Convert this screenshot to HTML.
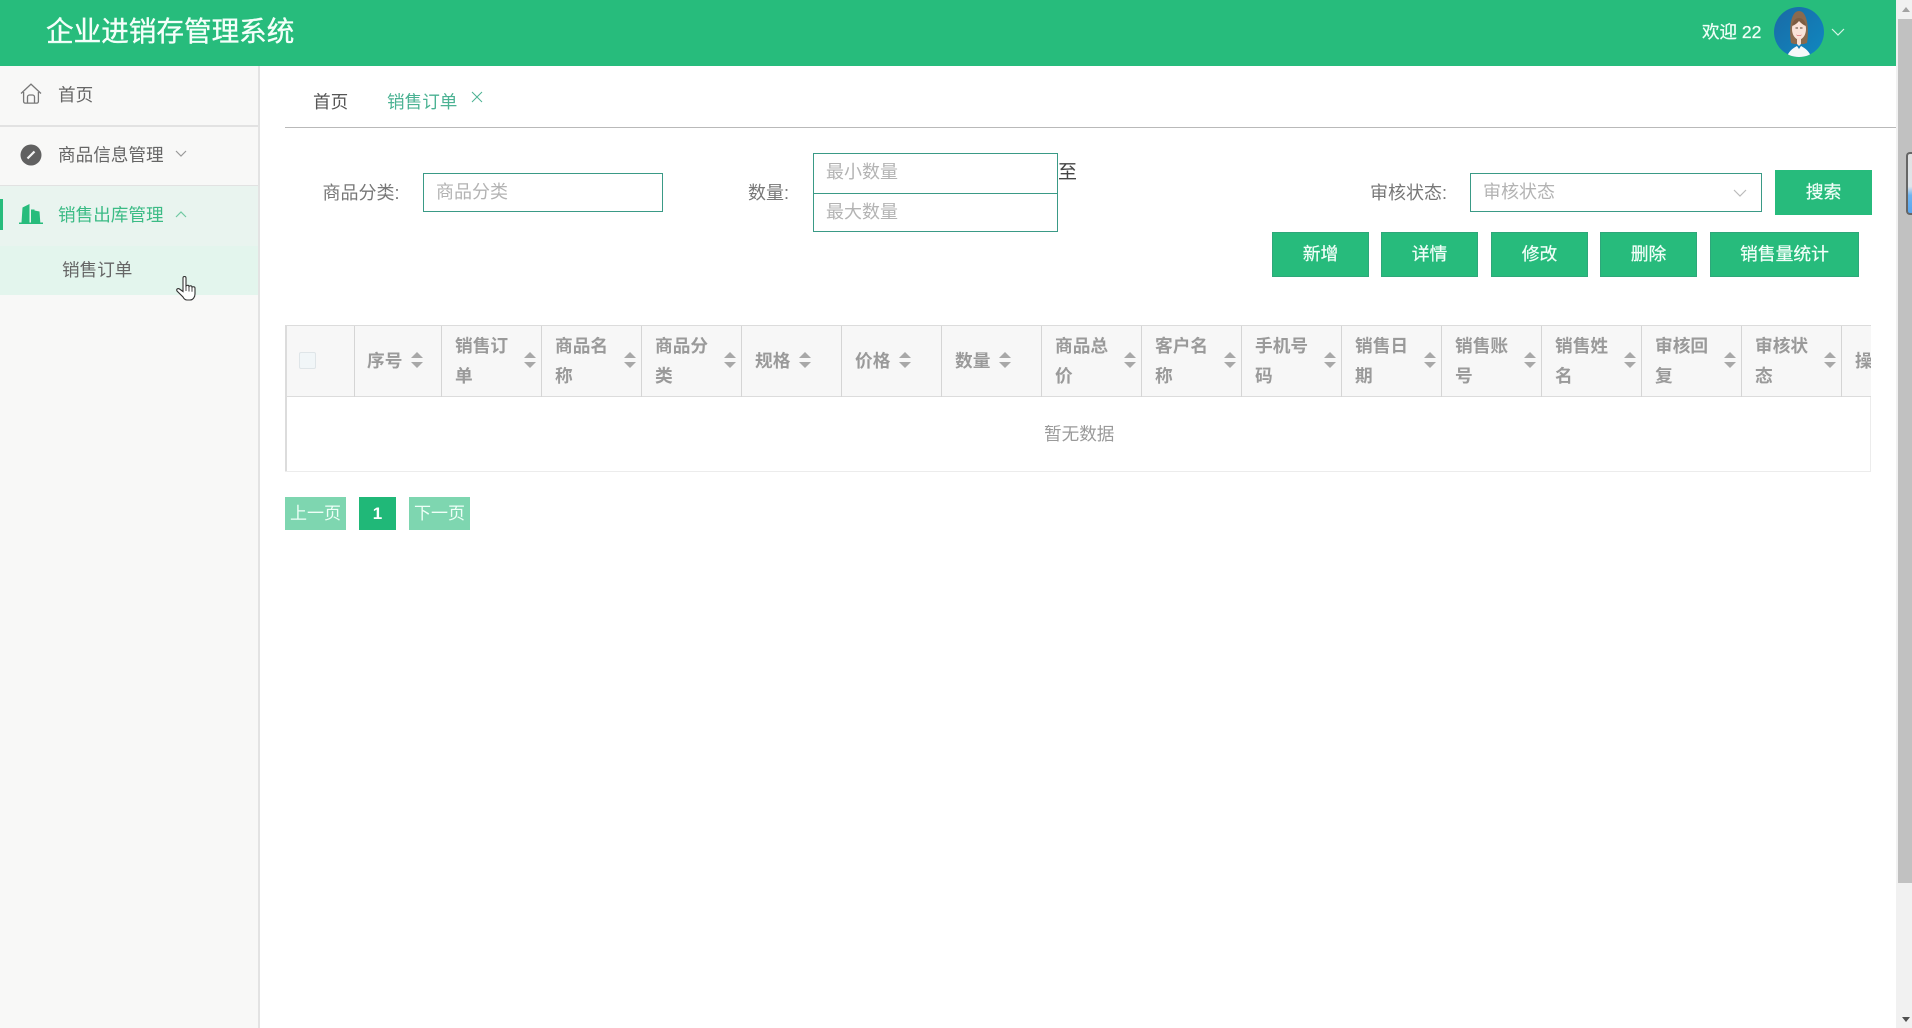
<!DOCTYPE html>
<html lang="zh-CN"><head><meta charset="utf-8"><title>企业进销存管理系统</title>
<style>
html,body{margin:0;padding:0;width:1912px;height:1028px;overflow:hidden;background:#fff}
body{position:relative;font-family:"Liberation Sans","Noto Sans CJK SC",sans-serif;font-size:17.6px;color:#666}
.a{position:absolute;white-space:nowrap}
.t{position:absolute;white-space:nowrap;line-height:30px;height:30px}
.b{position:absolute;background:#27bb7c;border:1px solid #2ea77a;box-sizing:border-box;color:#f2fff9;text-align:center;font-size:17.8px;line-height:43px;height:45px;top:232px;-webkit-text-stroke:.2px #f2fff9}
.i{position:absolute;box-sizing:border-box;border:1.5px solid #3a9a86;background:#fff;color:#b3b3b3;padding-left:12px;font-size:18px}
.c{position:absolute;top:326px;width:1px;height:71px;background:#d5d5d5}
.h{position:absolute;font-weight:bold;color:#9a9a9a;font-size:17.7px;line-height:30px;white-space:nowrap}
.s{position:absolute;width:12px;height:16px;top:352px}
.s:before,.s:after{content:"";position:absolute;left:0;border-left:6px solid transparent;border-right:6px solid transparent}
.s:before{top:0;border-bottom:6.5px solid #a8a8a8}
.s:after{bottom:0;border-top:6.5px solid #a8a8a8}
</style></head><body>

<!-- header -->
<div class="a" style="left:0;top:0;width:1896px;height:66px;background:#27bc7c"></div>
<div class="t" style="left:46px;top:12px;line-height:40px;height:40px;font-size:27.6px;color:#f4fffa;-webkit-text-stroke:.35px #f4fffa">企业进销存管理系统</div>
<div class="t" style="left:1702px;top:17px;color:#effff8;font-size:17.5px;-webkit-text-stroke:.25px #effff8">欢迎 22</div>
<svg class="a" style="left:1774px;top:7px" width="50" height="50" viewBox="0 0 50 50">
<defs><linearGradient id="g" x1="0" y1="0" x2="1" y2="1"><stop offset="0" stop-color="#1a6aa6"/><stop offset="1" stop-color="#0f88c0"/></linearGradient><clipPath id="cp"><circle cx="25" cy="25" r="25"/></clipPath></defs>
<g clip-path="url(#cp)"><rect width="50" height="50" fill="url(#g)"/>
<path d="M17 36C15 24 16 4 25 4s10 20 8 32l-3 1H20z" fill="#8a6a4e"/>
<ellipse cx="25" cy="22" rx="7" ry="10.500" fill="#fae3d9"/>
<path d="M18 19c1-6 4-8 7-8s6 2 7 8c-3-1-5-3-7-5-1.500 2-4 4-7 5z" fill="#7d5d43"/>
<path d="M23 31h4v6l-2 2-2-2z" fill="#f8dfd4"/>
<path d="M22 27.500c2 1.200 4 1.200 6 0-1 2-5 2-6 0z" fill="#d6505f"/>
<path d="M21.500 21h2.500M26 21h2.500" stroke="#5a4030" stroke-width=".9"/>
<path d="M13 50c1-5 6-9 10-11l2 3 2-3c4 2 9 6 10 11z" fill="#f6f8f9"/></g></svg>
<svg class="a" style="left:1830px;top:27px" width="16" height="11"><path d="M2 2l6 6 6-6" fill="none" stroke="#d8f5e8" stroke-width="1.2"/></svg>

<!-- sidebar -->
<div class="a" style="left:0;top:66px;width:258px;height:962px;background:#f8f8f7;border-right:2px solid #e3e3e3"></div>
<div class="a" style="left:0;top:125px;width:258px;height:1.5px;background:#e2e2e2"></div>
<div class="a" style="left:0;top:185px;width:258px;height:1.5px;background:#e2e2e2"></div>
<div class="a" style="left:0;top:186px;width:258px;height:60px;background:#e9f4ef"></div>
<div class="a" style="left:0;top:246px;width:258px;height:49px;background:#e3f5ed"></div>
<div class="a" style="left:0;top:199px;width:3px;height:31px;background:#27bc7c"></div>

<svg class="a" style="left:20px;top:83px" width="22" height="22" viewBox="0 0 22 22"><path d="M1 10.500L11 1.200l10 9.300M3.600 9v9.500a1.600 1.600 0 0 0 1.600 1.600h11.600a1.600 1.600 0 0 0 1.600-1.600V9M7.500 20v-6a2 2 0 0 1 2-2h3a2 2 0 0 1 2 2v6" fill="none" stroke="#777" stroke-width="1.300"/></svg>
<div class="t" style="left:58px;top:80px">首页</div>

<svg class="a" style="left:20px;top:144px" width="22" height="22" viewBox="0 0 22 22"><circle cx="11" cy="11" r="10.500" fill="#616161"/><path d="M7.500 14.500L14.500 7.500" stroke="#f4f4f4" stroke-width="2.200"/></svg>
<div class="t" style="left:58px;top:140px">商品信息管理</div>
<svg class="a" style="left:174px;top:149px" width="14" height="10"><path d="M2 2l5 5 5-5" fill="none" stroke="#999" stroke-width="1.200"/></svg>

<svg class="a" style="left:19px;top:203px" width="24" height="21" viewBox="0 0 24 21"><path d="M0 19.500h24V21H0z" fill="#27bc7c"/><path d="M2.500 19.500L3.500 4.500 10.500 1v18.500zM12 19.500V6.500h3.500v13zM15.500 7.500l5 1 .8 11h-5.800z" fill="#27bc7c"/></svg>
<div class="t" style="left:58px;top:199.500px;color:#3bbb85">销售出库管理</div>
<svg class="a" style="left:174px;top:209px" width="14" height="10"><path d="M2 8l5-5 5 5" fill="none" stroke="#6fc9a2" stroke-width="1.200"/></svg>

<div class="t" style="left:62px;top:255px">销售订单</div>
<svg class="a" style="left:176px;top:276px" width="22" height="26" viewBox="0 0 22 26"><path d="M7 2c0-2 3-2 3 0v8c1-1 3-1 3 .500 1-1 3-1 3 .700 1-.800 3-.500 3 1V18c0 3-2 6-5 6h-3c-2 0-3-1-4-3L1 15c-1-2 1-3 2.500-2L7 15.500z" fill="#fff" stroke="#333" stroke-width="1.100"/><path d="M10 10v5M13 10.500v5M16 11.200v4.500" stroke="#333" stroke-width=".9"/></svg>

<!-- tabs -->
<div class="a" style="left:285px;top:127px;width:1611px;height:1px;background:#b9b9b9"></div>
<div class="t" style="left:313px;top:87px;color:#555">首页</div>
<div class="t" style="left:387px;top:87px;color:#4bb293">销售订单</div>
<svg class="a" style="left:471px;top:91px" width="12" height="12"><path d="M1 1l10 10M11 1L1 11" stroke="#4bb293" stroke-width="1"/></svg>

<!-- search -->
<div class="t" style="left:322.500px;top:178px;color:#777;font-size:18px">商品分类:</div>
<div class="i" style="left:423px;top:173px;width:240px;height:39px;line-height:36px">商品分类</div>
<div class="t" style="left:748px;top:178px;color:#777;font-size:18px">数量:</div>
<div class="i" style="left:813px;top:153px;width:245px;height:41px;line-height:37px">最小数量</div>
<div class="i" style="left:813px;top:193px;width:245px;height:39px;line-height:37px">最大数量</div>
<div class="t" style="left:1058px;top:158px;font-size:19px;color:#444">至</div>
<div class="t" style="left:1370px;top:178px;color:#777;font-size:18px">审核状态:</div>
<div class="i" style="left:1470px;top:173px;width:292px;height:39px;line-height:36px">审核状态</div>
<svg class="a" style="left:1732px;top:188px" width="16" height="11"><path d="M2 2l6 6 6-6" fill="none" stroke="#bbb" stroke-width="1.200"/></svg>
<div class="b" style="left:1775px;top:170px;width:97px;border:0;line-height:45px">搜索</div>

<!-- buttons -->
<div class="b" style="left:1272px;width:97px">新增</div>
<div class="b" style="left:1381px;width:97px">详情</div>
<div class="b" style="left:1491px;width:97px">修改</div>
<div class="b" style="left:1600px;width:97px">删除</div>
<div class="b" style="left:1710px;width:149px">销售量统计</div>

<!-- table -->
<div class="a" style="left:285px;top:325px;width:1586px;height:72px;background:#f7f7f7;border-top:1.500px solid #dcdcdc;border-bottom:1.500px solid #dcdcdc;box-sizing:border-box"></div>
<div class="a" style="left:285px;top:325px;width:1.500px;height:147px;background:#dcdcdc"></div>
<div class="a" style="left:285px;top:471px;width:1586px;height:1px;background:#ececec"></div>
<div class="a" style="left:1870px;top:397px;width:1px;height:75px;background:#ececec"></div>
<div class="a" style="left:299px;top:352px;width:17px;height:17px;box-sizing:border-box;background:#f1f6f8;border:1px solid #dfe5e8;border-radius:2px"></div>

<div class="c" style="left:354px"></div><div class="c" style="left:441px"></div><div class="c" style="left:541px"></div><div class="c" style="left:641px"></div><div class="c" style="left:741px"></div><div class="c" style="left:841px"></div><div class="c" style="left:941px"></div><div class="c" style="left:1041px"></div><div class="c" style="left:1141px"></div><div class="c" style="left:1241px"></div><div class="c" style="left:1341px"></div><div class="c" style="left:1441px"></div><div class="c" style="left:1541px"></div><div class="c" style="left:1641px"></div><div class="c" style="left:1741px"></div><div class="c" style="left:1841px"></div>

<div class="h" style="left:367px;top:346px">序号</div><div class="s" style="left:411px"></div>
<div class="h" style="left:455px;top:331px">销售订<br>单</div><div class="s" style="left:524px"></div>
<div class="h" style="left:555px;top:331px">商品名<br>称</div><div class="s" style="left:624px"></div>
<div class="h" style="left:655px;top:331px">商品分<br>类</div><div class="s" style="left:724px"></div>
<div class="h" style="left:755px;top:346px">规格</div><div class="s" style="left:799px"></div>
<div class="h" style="left:855px;top:346px">价格</div><div class="s" style="left:899px"></div>
<div class="h" style="left:955px;top:346px">数量</div><div class="s" style="left:999px"></div>
<div class="h" style="left:1055px;top:331px">商品总<br>价</div><div class="s" style="left:1124px"></div>
<div class="h" style="left:1155px;top:331px">客户名<br>称</div><div class="s" style="left:1224px"></div>
<div class="h" style="left:1255px;top:331px">手机号<br>码</div><div class="s" style="left:1324px"></div>
<div class="h" style="left:1355px;top:331px">销售日<br>期</div><div class="s" style="left:1424px"></div>
<div class="h" style="left:1455px;top:331px">销售账<br>号</div><div class="s" style="left:1524px"></div>
<div class="h" style="left:1555px;top:331px">销售姓<br>名</div><div class="s" style="left:1624px"></div>
<div class="h" style="left:1655px;top:331px">审核回<br>复</div><div class="s" style="left:1724px"></div>
<div class="h" style="left:1755px;top:331px">审核状<br>态</div><div class="s" style="left:1824px"></div>
<div class="h" style="left:1855px;top:346px;width:16px;overflow:hidden">操作</div>
<div class="t" style="left:1044px;top:419px;color:#9a9a9a">暂无数据</div>

<!-- pagination -->
<div class="a" style="left:285px;top:497px;width:61px;height:33px;background:#7ed6b0;color:#eefff7;text-align:center;line-height:34px;font-size:17px">上一页</div>
<div class="a" style="left:359px;top:497px;width:37px;height:33px;background:#20b878;color:#fff;text-align:center;line-height:34px;font-size:17px;font-weight:bold">1</div>
<div class="a" style="left:409px;top:497px;width:61px;height:33px;background:#7ed6b0;color:#eefff7;text-align:center;line-height:34px;font-size:17px">下一页</div>

<!-- scrollbar -->
<div class="a" style="left:1896px;top:0;width:16px;height:1028px;background:#f1f1f1"></div>
<div class="a" style="left:1898px;top:19px;width:14px;height:864px;background:#c1c1c1"></div>
<div class="a" style="left:1902px;top:7px;width:0;height:0;border-left:4.500px solid transparent;border-right:4.500px solid transparent;border-bottom:5px solid #a3a3a3"></div>
<div class="a" style="left:1902px;top:1017px;width:0;height:0;border-left:4.500px solid transparent;border-right:4.500px solid transparent;border-top:5px solid #505050"></div>
<div class="a" style="left:1906px;top:152px;width:6px;height:63px;box-sizing:border-box;border:2px solid #666;border-right:0;border-radius:4px 0 0 4px;background:linear-gradient(#e2e2e2 0,#dfe5ea 55%,#6fb4f0 70%,#5aa6ee 100%)"></div>

</body></html>
